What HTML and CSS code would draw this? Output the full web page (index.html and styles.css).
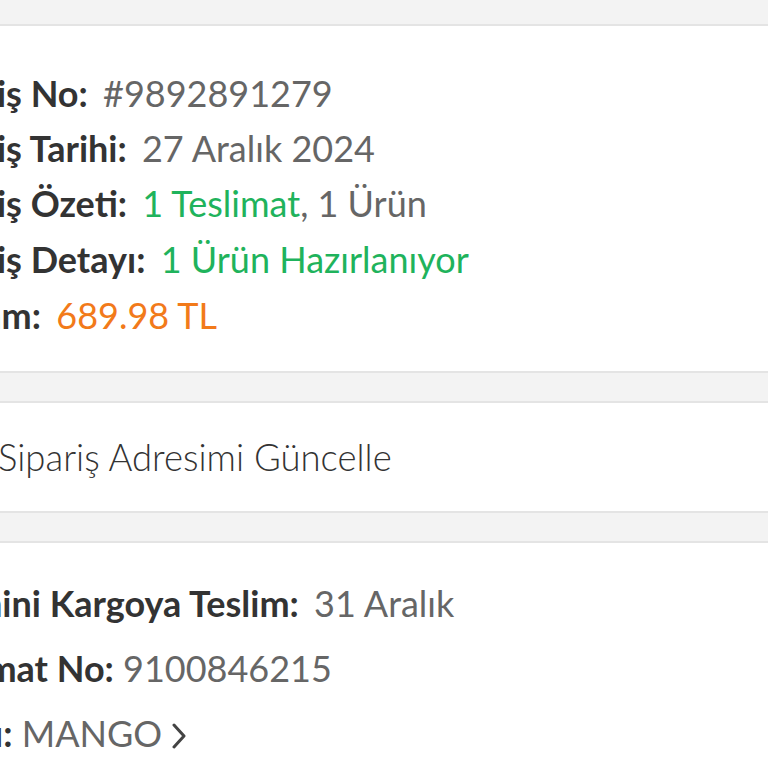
FILE: index.html
```html
<!DOCTYPE html>
<html lang="tr">
<head>
  <meta charset="UTF-8" />
  <meta name="viewport" content="width=device-width, initial-scale=1.0" />
  <title>Sipariş Detayı</title>
  <link rel="stylesheet" href="styles.css">
</head>
<body>

<div class="page">
  <div class="gap gap-top"></div>

  <!-- Order summary -->
  <section class="card summary">
    <div class="line"><span class="label">Sipariş No:</span> <span class="value">#9892891279</span></div>
    <div class="line"><span class="label">Sipariş Tarihi:</span> <span class="value">27 Aralık 2024</span></div>
    <div class="line"><span class="label">Sipariş Özeti:</span> <span class="value"><span class="green">1 Teslimat</span>, 1 Ürün</span></div>
    <div class="line"><span class="label">Sipariş Detayı:</span> <span class="value green">1 Ürün Hazırlanıyor</span></div>
    <div class="line"><span class="label">Toplam:</span> <span class="value orange">689.98 TL</span></div>
  </section>

  <div class="gap"></div>

  <!-- Address action -->
  <section class="card address">
    <div class="address-link">Sipariş Adresimi Güncelle</div>
  </section>

  <div class="gap"></div>

  <!-- Delivery -->
  <section class="card delivery">
    <div class="line"><span class="label">Tahmini Kargoya Teslim:</span> <span class="value">31 Aralık</span></div>
    <div class="line"><span class="label tight">Teslimat No:</span> <span class="value">9100846215</span></div>
    <div class="line"><span class="label tight">Satıcı:</span> <span class="value">MANGO</span>
      <svg class="chev" width="16" height="26" viewBox="0 0 16 26"><path d="M3 2 L13 13 L3 24" fill="none" stroke="#444" stroke-width="3" stroke-linecap="round" stroke-linejoin="round"/></svg>
    </div>
  </section>
</div>

</body>
</html>
```

FILE: styles.css
```css
*, *::before, *::after { box-sizing: border-box; margin: 0; padding: 0; }

:root {
  --bg:     #f3f3f3;
  --border: #e4e4e4;
  --white:  #ffffff;
  --label:  #333333;
  --value:  #666666;
  --green:  #1fb35c;
  --orange: #f27a1a;
}

html, body {
  width: 768px;
  height: 768px;
  overflow: hidden;
}

body {
  font-family: 'Lato', 'Open Sans', sans-serif;
  background: var(--bg);
  color: var(--label);
}

.page {
  width: 768px;
  overflow: hidden;
}

.gap {
  height: 28px;
  background: var(--bg);
}

.gap-top {
  height: 24px;
}

.card {
  background: var(--white);
  border-top: 2px solid var(--border);
  border-bottom: 2px solid var(--border);
  margin-left: -84px;
}

.line {
  font-size: 36px;
  line-height: 56px;
  white-space: nowrap;
}

.label {
  font-weight: 700;
  color: var(--label);
  margin-right: 6px;
}

.label.tight {
  margin-right: 0;
}

.value {
  color: var(--value);
}

.green { color: var(--green); }
.orange { color: var(--orange); }

.summary {
  padding-top: 39px;
  padding-bottom: 28px;
}

.summary .line:nth-child(2) { line-height: 54px; }

.address {
  height: 112px;
  display: flex;
  align-items: center;
  margin-left: -2px;
}

.address-link {
  font-size: 36.5px;
  font-weight: 300;
  color: var(--label);
}

.delivery {
  padding-top: 28px;
  border-bottom: none;
  min-height: 240px;
}

.delivery .line {
  line-height: 65px;
}

.chev {
  vertical-align: -2px;
  margin-left: 0;
}
```
